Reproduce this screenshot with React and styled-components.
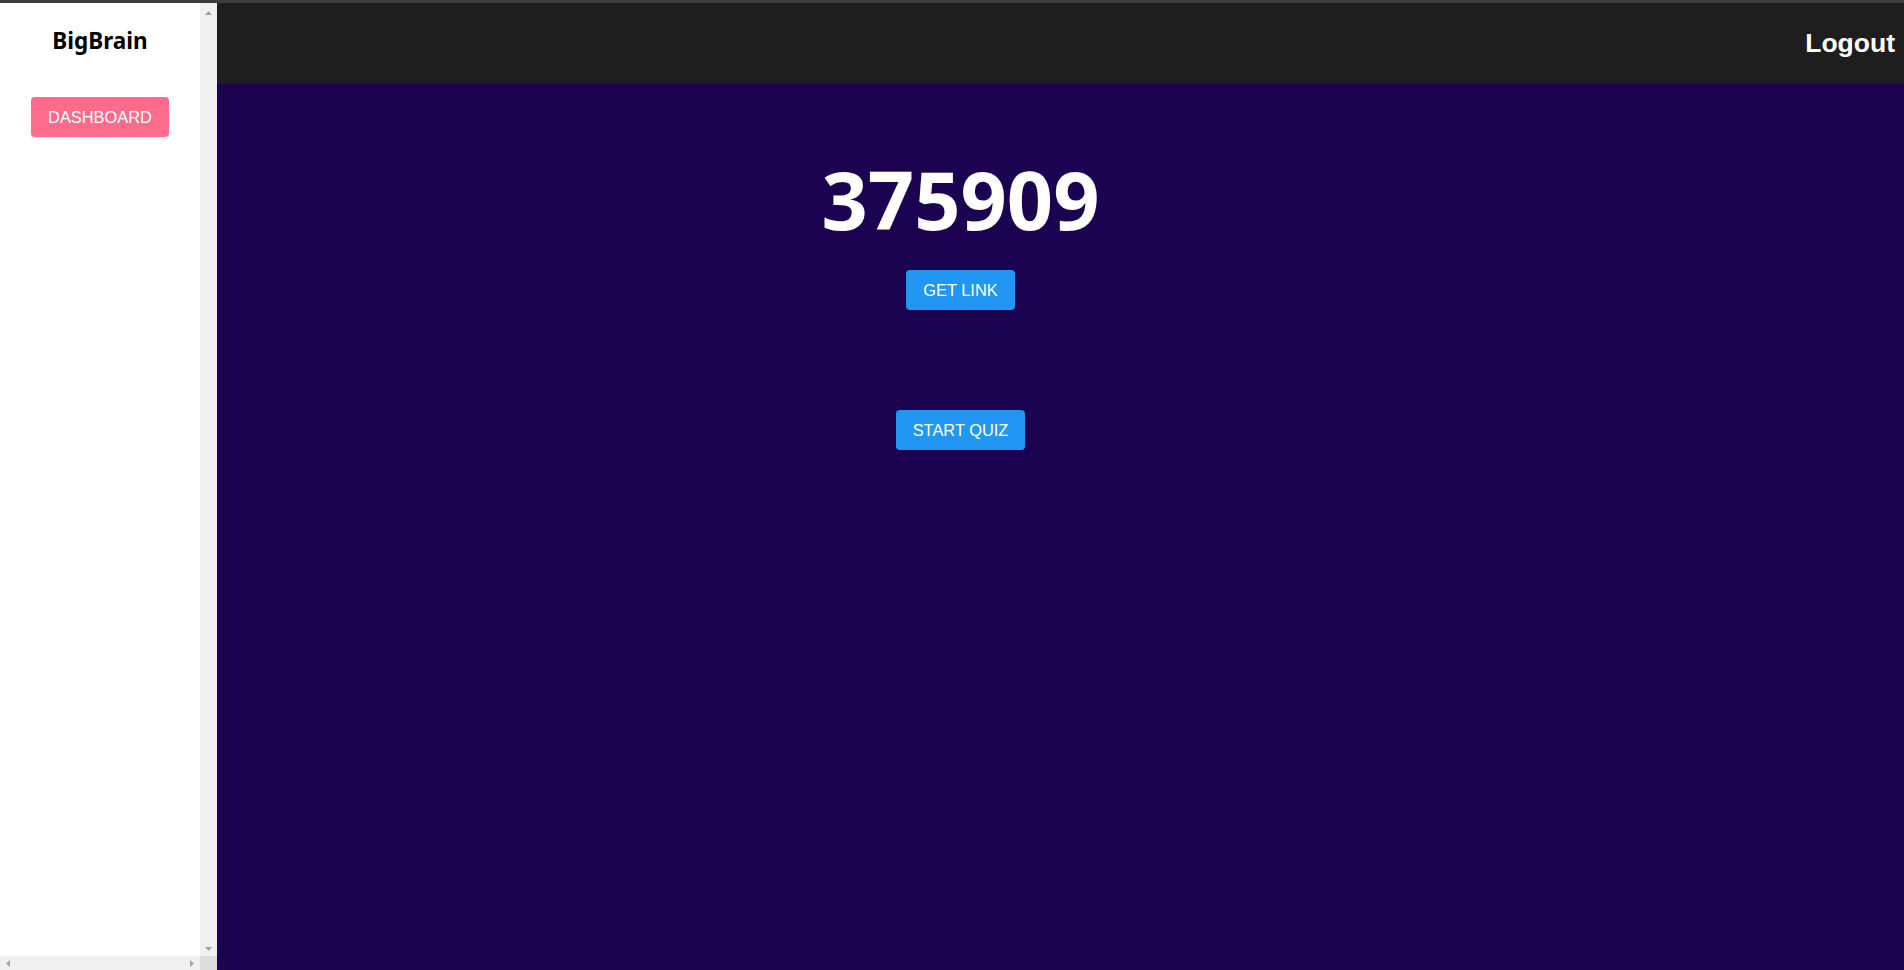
import React from 'react';
import styled, { createGlobalStyle } from 'styled-components';

const GlobalStyle = createGlobalStyle`
  html, body {
    margin: 0;
    padding: 0;
    height: 100%;
    overflow: hidden;
  }
  #root {
    height: 100%;
  }
  * {
    box-sizing: border-box;
  }
`;

const Page = styled.div`
  display: flex;
  height: 100vh;
  border-top: 3px solid #3c3c3c;
  font-family: 'Liberation Sans', Arial, sans-serif;
`;

// sidebar frame: content + fake classic scrollbars
const Sidebar = styled.aside`
  width: 217px;
  flex-shrink: 0;
  height: 100%;
  background: #ffffff;
  display: grid;
  grid-template-columns: 1fr 17px;
  grid-template-rows: 1fr 14px;
`;

const SideInner = styled.div`
  display: flex;
  flex-direction: column;
  align-items: center;
  padding-top: 25px;
  gap: 43px;
  overflow: hidden;
`;

const VTrack = styled.div`
  background: #f0f0f0;
  display: flex;
  flex-direction: column;
  justify-content: space-between;
  align-items: center;
  padding: 8px 0 5px;
`;

const HTrack = styled.div`
  background: #f0f0f0;
  display: flex;
  justify-content: space-between;
  align-items: center;
  padding: 0 6px;
`;

const Corner = styled.div`
  background: #dcdcdc;
`;

const Arrow = ({ dir }) => {
  const pts = {
    up: '3.5,0 7,4 0,4',
    down: '0,0 7,0 3.5,4',
    left: '4,0 4,7 0,3.5',
    right: '0,0 4,3.5 0,7',
  }[dir];
  const vertical = dir === 'up' || dir === 'down';
  return (
    <svg width={vertical ? 7 : 4} height={vertical ? 4 : 7} style={{ display: 'block' }}>
      <polygon points={pts} fill="#a3a3a3" />
    </svg>
  );
};

const Brand = styled.h2`
  margin: 0;
  font-family: 'Noto Sans', sans-serif;
  font-size: 22.5px;
  line-height: 26px;
  font-weight: 700;
  color: #000;
`;

const Button = styled.button`
  height: 40px;
  padding: 0 17px;
  border: none;
  border-radius: 4px;
  background: ${props => props.color || '#2196f3'};
  color: #fff;
  font-family: 'Liberation Sans', Arial, sans-serif;
  font-size: 16.4px;
  text-transform: uppercase;
  cursor: pointer;
`;

const Main = styled.div`
  flex: 1;
  display: flex;
  flex-direction: column;
  min-width: 0;
`;

const Header = styled.header`
  height: 81px;
  flex-shrink: 0;
  background: #1e1e1e;
  display: flex;
  align-items: center;
  justify-content: flex-end;
  padding-right: 9px;
`;

const LogoutLink = styled.span`
  color: #fff;
  font-family: 'Liberation Sans', Arial, sans-serif;
  font-weight: 700;
  font-size: 26.5px;
  cursor: pointer;
`;

const Content = styled.main`
  flex: 1;
  background: #1b0352;
  display: flex;
  flex-direction: column;
  align-items: center;
  padding: 66px 200px 0 0;
`;

const SessionCode = styled.h1`
  margin: 0;
  font-family: 'Noto Sans', sans-serif;
  font-size: 81px;
  line-height: 98px;
  font-weight: 700;
  color: #fff;
`;

const LinkRow = styled.div`
  margin-top: 22px;
`;

const StartRow = styled.div`
  margin-top: 100px;
`;

export default function App() {
  return (
    <>
      <GlobalStyle />
      <Page>
        <Sidebar>
          <SideInner>
            <Brand>BigBrain</Brand>
            <Button color="#ff6b8b">Dashboard</Button>
          </SideInner>
          <VTrack>
            <Arrow dir="up" />
            <Arrow dir="down" />
          </VTrack>
          <HTrack>
            <Arrow dir="left" />
            <Arrow dir="right" />
          </HTrack>
          <Corner />
        </Sidebar>
        <Main>
          <Header>
            <LogoutLink>Logout</LogoutLink>
          </Header>
          <Content>
            <SessionCode>375909</SessionCode>
            <LinkRow>
              <Button>Get Link</Button>
            </LinkRow>
            <StartRow>
              <Button>Start Quiz</Button>
            </StartRow>
          </Content>
        </Main>
      </Page>
    </>
  );
}
